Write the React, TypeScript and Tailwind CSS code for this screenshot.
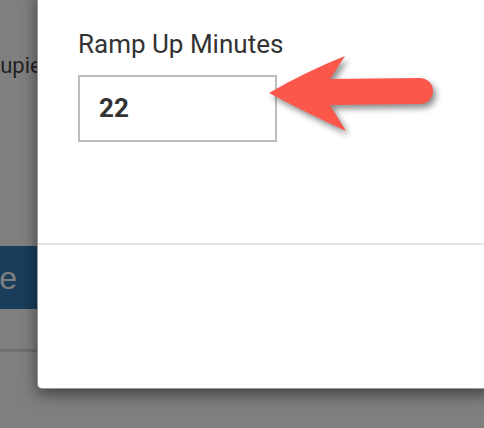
export default function App() {
  return (
    <div className="relative h-[428px] w-[484px] overflow-hidden bg-white font-['Roboto',sans-serif]">
      {/* page underneath the modal */}
      <div className="flex flex-col">
        <div className="ml-[-38px] mt-[53px] whitespace-nowrap text-[22px] leading-[26px] text-[#444]">
          Occupied
        </div>
        <div className="mt-[167px] flex h-[63px] items-center bg-[#337ab7]">
          <span className="ml-[-56px] whitespace-nowrap font-['Liberation_Sans',sans-serif] text-[32px] font-light text-white">
            Save
          </span>
        </div>
        <div className="mt-[40px] h-[3px] bg-[#ddd]" />
      </div>

      {/* backdrop */}
      <div className="absolute inset-0 bg-black/50" />

      {/* modal */}
      <div className="absolute left-[37px] right-[-10px] top-[-10px] flex h-[399px] flex-col rounded-[5px] border border-black/40 bg-white shadow-[0_5px_15px_rgba(0,0,0,0.5)]">
        <div className="flex h-[252px] flex-col pl-[40px] pt-[38px]">
          <label className="text-[26px] leading-[30px] text-[#333]">Ramp Up Minutes</label>
          <div className="mt-[16px] flex h-[67px] w-[199px] items-center border-2 border-[#bdbdbd] pl-[19px] text-[26px] font-bold text-[#333]">
            22
          </div>
        </div>
        <div className="h-[2px] bg-[#e5e5e5]" />
        <div className="flex-1" />
      </div>

      {/* callout arrow */}
      <svg
        className="absolute left-[260px] top-[45px] drop-shadow-[3px_4px_3px_rgba(0,0,0,0.45)]"
        width="190"
        height="100"
        viewBox="260 45 190 100"
      >
        <path
          d="M269 93 Q305 72 345 56 L330 79 L420 78 A13 13 0 0 1 420 104 L330 105 L346 131 Q305 112 269 93 Z"
          fill="#fc574b"
        />
      </svg>
    </div>
  );
}
